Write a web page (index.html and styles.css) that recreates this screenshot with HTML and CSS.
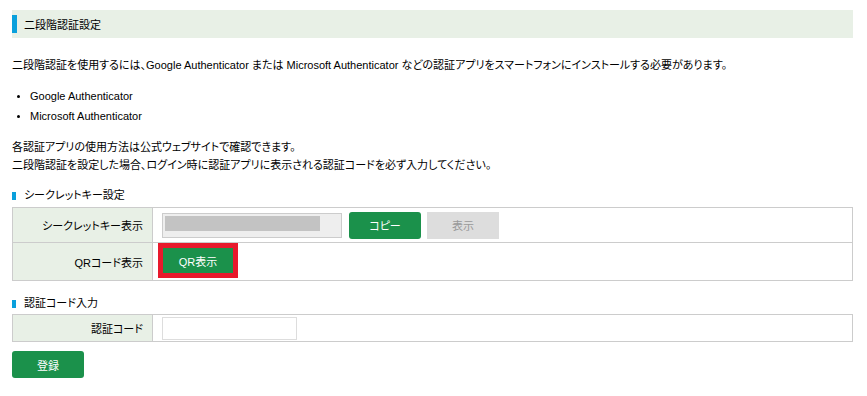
FILE: index.html
```html
<!DOCTYPE html>
<html lang="ja">
<head>
    <meta charset="utf-8">
    <link rel="stylesheet" href="styles.css">
</head>
<body>
    <div class="container">
        <h2 class="page-title">二段階認証設定</h2>

        <p class="intro">二段階認証を使用するには、Google Authenticator または Microsoft Authenticator などの認証アプリをスマートフォンにインストールする必要があります。</p>

        <ul class="app-list">
            <li>Google Authenticator</li>
            <li>Microsoft Authenticator</li>
        </ul>

        <p class="note">各認証アプリの使用方法は公式ウェブサイトで確認できます。<br>二段階認証を設定した場合、ログイン時に認証アプリに表示される認証コードを必ず入力してください。</p>

        <h3 class="section-title">シークレットキー設定</h3>
        <table class="form-table">
            <tr class="row-key">
                <th>シークレットキー表示</th>
                <td>
                    <div class="cell-inner">
                        <div class="secret-box"><span class="secret-mask"></span></div>
                        <button class="button green">コピー</button>
                        <button class="button gray">表示</button>
                    </div>
                </td>
            </tr>
            <tr class="row-qr">
                <th>QRコード表示</th>
                <td>
                    <div class="cell-inner">
                        <button class="button green highlight">QR表示</button>
                    </div>
                </td>
            </tr>
        </table>

        <h3 class="section-title second">認証コード入力</h3>
        <table class="form-table">
            <tr class="row-code">
                <th>認証コード</th>
                <td>
                    <div class="cell-inner">
                        <input type="text" class="code-input">
                    </div>
                </td>
            </tr>
        </table>

        <button class="button green submit">登録</button>
    </div>
</body>
</html>
```

FILE: styles.css
```css
body {
    margin: 0;
    font-family: "Liberation Sans", Arial, "Noto Sans CJK JP", sans-serif;
    font-size: 11px;
    font-feature-settings: "palt";
    color: #000;
    background-color: white;
}

.container {
    width: 841px;
    padding: 10px 0 0 12px;
}

.page-title {
    margin: 0;
    height: 28px;
    display: flex;
    align-items: center;
    background-color: #e8f0e6;
    font-size: 11px;
    font-weight: normal;
    padding-left: 12px;
    position: relative;
}

.page-title::before {
    content: "";
    position: absolute;
    left: 0;
    top: 5px;
    width: 5px;
    height: 18px;
    background-color: #0aa0dc;
}

.intro {
    margin: 18px 0 0 0;
    line-height: 18px;
}

.app-list {
    margin: 12px 0 0 0;
    padding-left: 18px;
    line-height: 20px;
}

.app-list li::marker {
    font-size: 10px;
}

.note {
    margin: 12px 0 0 0;
    line-height: 18px;
}

.section-title {
    margin: 12px 0 3px 0;
    font-size: 11px;
    font-weight: normal;
    line-height: 18px;
    padding-left: 12px;
    position: relative;
}

.section-title::before {
    content: "";
    position: absolute;
    left: 0;
    top: 6px;
    width: 4px;
    height: 8px;
    background-color: #0aa0dc;
}

.section-title.second {
    margin-top: 13px;
    margin-bottom: 2px;
}

.form-table {
    width: 100%;
    border-collapse: collapse;
}

.form-table th,
.form-table td {
    border: 1px solid #cccccc;
    padding: 0;
    vertical-align: middle;
}

.form-table th {
    width: 130px;
    background-color: #e8f0e6;
    font-weight: normal;
    text-align: right;
    padding-right: 9px;
}

.form-table td {
    padding-left: 9px;
}

.row-key th { height: 34px; }
.row-qr th { height: 37px; }
.row-code th { height: 26px; }

.row-qr .cell-inner {
    padding: 2px 0 4px 0;
}

.cell-inner {
    display: flex;
    align-items: center;
}

.secret-box {
    width: 174px;
    height: 19px;
    border: 1px solid #cccccc;
    background-color: #eeeeee;
    padding: 2px;
    display: flex;
    align-items: flex-start;
    margin-right: 7px;
}

.secret-mask {
    display: block;
    width: 155px;
    height: 15px;
    background-color: #c3c3c3;
}

.button {
    border: none;
    border-radius: 3px;
    font-family: inherit;
    font-size: 11px;
    font-feature-settings: "palt";
    width: 72px;
    height: 27px;
    padding: 0;
    cursor: pointer;
}

.button.green {
    background-color: #1b914b;
    color: white;
}

.button.gray {
    background-color: #dddddd;
    color: #999999;
    border-radius: 0;
    margin-left: 6px;
}

.button.highlight {
    width: 70px;
    height: 25px;
    border-radius: 0;
    outline: 5px solid #e8192c;
    margin-left: 1px;
}

.code-input {
    width: 133px;
    height: 21px;
    border: 1px solid #dddddd;
    padding: 0;
    margin: 0;
}

.submit {
    margin-top: 9px;
}
```
